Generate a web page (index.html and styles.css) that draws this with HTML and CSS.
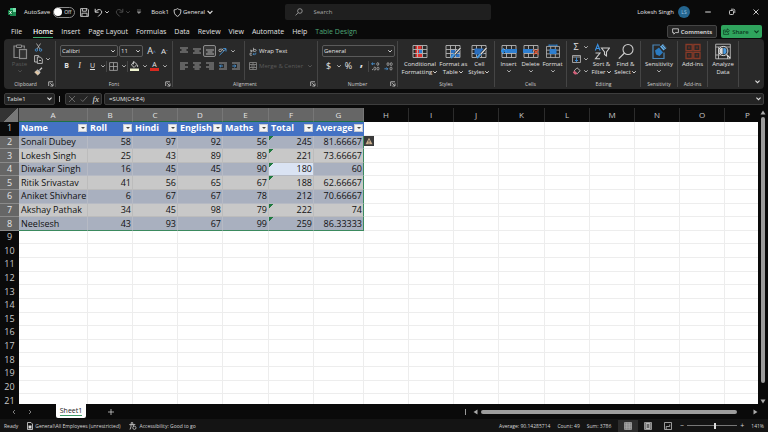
FILE: index.html
```html
<!DOCTYPE html>
<html lang="en">

<head>
  <meta charset="UTF-8" />
  <meta name="viewport" content="width=device-width, initial-scale=1.0" />
  <title>Book1 - Excel</title>
  <link rel="stylesheet" href="styles.css">
</head>

<body>

  <!-- Shared icons -->
  <svg class="defs" width="0" height="0" aria-hidden="true">
    <symbol id="chev" viewBox="0 0 6 6"><path d="M1.2 2.2 3 4l1.8-1.8" fill="none" stroke="currentColor" stroke-width="0.9" /></symbol>
    <symbol id="launch" viewBox="0 0 6 6"><path d="M.7 5V.8H5M2.2 2.2l2.4 2.4M5 2.4V5H2.4" fill="none" stroke="currentColor" stroke-width="0.8" /></symbol>
    <symbol id="grid" viewBox="0 0 16 14"><path d="M1 1h14v12H1zM1 5h14M1 9h14M5.5 1v12M10.5 1v12" fill="none" stroke="#b5b5b5" stroke-width="0.9" /></symbol>
  </svg>

  <!-- Title bar -->
  <header class="titlebar">
    <div class="title-left">
      <svg class="logo" width="8" height="8" viewBox="0 0 8 8"><rect x="2" width="6" height="8" rx=".6" fill="#33c481" /><path d="M5 0h3v4H5z" fill="#7be0ac" /><path d="M2 4h6v4H2z" fill="#1e8a51" /><rect y="2" width="5" height="5" rx=".5" fill="#107c41" /><path d="m1.4 3 2.2 3M3.6 3 1.4 6" stroke="#fff" stroke-width=".8" /></svg>
      <label class="autosave">AutoSave
        <input type="checkbox" class="switch">
        <span class="switch-track"><span class="knob"></span>Off</span>
      </label>
      <button class="tool" aria-label="Save"><svg width="9" height="9" viewBox="0 0 9 9"><path d="M.6.6h6.6l1.2 1.2v6.6H.6zM2.4.8v2.4h4V.8M2 8.2V5.2h5v3" fill="none" stroke="#d0d0d0" stroke-width=".9" /></svg></button>
      <button class="tool" aria-label="Undo"><svg width="9" height="9" viewBox="0 0 9 9"><path d="M1.2.8v3.4h3.4M1.4 4C3 1.6 5 1.1 6.4 1.9c1.7 1 1.6 2.8.5 3.9L4.2 8.5" fill="none" stroke="#d8d8d8" /></svg><svg class="chev" width="6" height="6"><use href="#chev" /></svg></button>
      <button class="tool off" aria-label="Redo"><svg width="9" height="9" viewBox="0 0 9 9"><path d="M7.8.8v3.4H4.4M7.6 4C6 1.6 4 1.1 2.6 1.9 1 2.9 1 4.7 2.1 5.8l2.7 2.7" fill="none" stroke="currentColor" /></svg><svg class="chev" width="6" height="6"><use href="#chev" /></svg></button>
      <button class="tool" aria-label="Customize"><svg width="6" height="6" viewBox="0 0 6 6"><path d="M1 1h4M1.200 2.800 3 4.600l1.800-1.800z" fill="#999" stroke="#999" stroke-width=".6" /></svg></button>
      <span class="book">Book1</span>
      <button class="tool label-btn"><svg width="9" height="9" viewBox="0 0 9 9"><path d="M4.5.6c1.2.9 2.3 1.2 3.4 1.2C8.1 5 7 7.300 4.500 8.400 2 7.300.9 5 1.100 1.800 2.200 1.800 3.300 1.500 4.500.6z" fill="none" stroke="#d8d8d8" stroke-width=".9" /></svg>General<svg width="8" height="8"><use href="#chev" /></svg></button>
    </div>
    <label class="search">
      <svg width="8" height="8" viewBox="0 0 8 8"><circle cx="4.900" cy="3" r="2.300" fill="none" stroke="#aaa" stroke-width=".8" /><path d="M3.200 4.700.6 7.400" stroke="#aaa" stroke-width=".8" /></svg>
      <input type="text" placeholder="Search" aria-label="Search">
    </label>
    <div class="title-right">
      <span>Lokesh Singh</span>
      <span class="avatar">LS</span>
      <button class="win" aria-label="Minimize"><svg width="8" height="8" viewBox="0 0 8 8"><path d="M1.200 4h5.600" stroke="#ddd" /></svg></button>
      <button class="win" aria-label="Restore"><svg width="8" height="8" viewBox="0 0 8 8"><rect x="1.500" y="2.500" width="4" height="4" rx=".8" fill="none" stroke="#ddd" stroke-width=".9" /><path d="M3 1.200h2.500a1.300 1.300 0 0 1 1.300 1.300V5" fill="none" stroke="#ddd" stroke-width=".8" /></svg></button>
      <button class="win" aria-label="Close"><svg width="8" height="8" viewBox="0 0 8 8"><path d="m1.500 1.500 5 5M6.500 1.500l-5 5" stroke="#ddd" stroke-width=".9" /></svg></button>
    </div>
  </header>

  <!-- Tabs -->
  <nav class="tabs">
    <a href="#">File</a>
    <a href="#" class="active">Home</a>
    <a href="#">Insert</a>
    <a href="#">Page Layout</a>
    <a href="#">Formulas</a>
    <a href="#">Data</a>
    <a href="#">Review</a>
    <a href="#">View</a>
    <a href="#">Automate</a>
    <a href="#">Help</a>
    <a href="#" class="context">Table Design</a>
    <div class="tab-actions">
      <button class="comments"><svg width="7" height="7" viewBox="0 0 7 7"><path d="M.6.8h5.800v3.800H3.400L1.800 6.200V4.600H.6z" fill="none" stroke="#ddd" stroke-width=".8" /></svg>Comments</button>
      <button class="share"><svg width="7" height="7" viewBox="0 0 7 7"><path d="M2.500 2H.6v4.400h5V4.800M2 4.400C2.200 2.600 3.300 2 4.400 2V.8L6.500 2.700 4.400 4.500V3.300C3.300 3.300 2.600 3.600 2 4.400z" fill="none" stroke="currentColor" stroke-width=".7" /></svg>Share<svg class="chev" width="7" height="7"><use href="#chev" /></svg></button>
    </div>
  </nav>

  <!-- Ribbon -->
  <section class="ribbon">
    <div class="group g-clipboard">
      <div class="group-body">
        <button class="big off"><svg width="16" height="16" viewBox="0 0 16 16"><path d="M4.500 2.500H2V14h4.500M10 2.500h2.300V5" fill="none" stroke="#8a8a8a" stroke-width="1.200" /><path d="M4.500 1.500h5v2.500h-5z" fill="none" stroke="#8a8a8a" /><rect x="7.500" y="6" width="7" height="9" fill="#333" stroke="#8a8a8a" stroke-width="1.200" /></svg>Paste<svg width="6" height="6"><use href="#chev" /></svg></button>
        <div class="stack">
          <button class="sm" aria-label="Cut"><svg width="9" height="9" viewBox="0 0 9 9"><path d="M2.500.5 6 6M6.500.5 3 6" stroke="#bbb" stroke-width=".8" /><circle cx="2.400" cy="7" r="1.200" fill="none" stroke="#4a9be0" stroke-width=".8" /><circle cx="6.600" cy="7" r="1.200" fill="none" stroke="#4a9be0" stroke-width=".8" /></svg></button>
          <div class="row"><button class="sm" aria-label="Copy"><svg width="9" height="9" viewBox="0 0 9 9"><path d="M3.200 7H.6V.6h4v1.200M3.300 2h3l2 2v4.400h-5zM5 5.500h2" fill="none" stroke="#c4c4c4" stroke-width=".9" /></svg></button><button class="arrow" aria-label="Copy options"><svg width="6" height="6"><use href="#chev" /></svg></button></div>
          <button class="sm" aria-label="Format Painter"><svg width="9" height="9" viewBox="0 0 9 9"><path d="m8 .8-2.600 2.600M3.200 2.700l3 3" stroke="#ccc" stroke-width="1.300" /><path d="M2.600 3.400.6 5.200l3.200 3 2-2.200z" fill="#e4c9a5" stroke="#ccc" stroke-width=".5" /></svg></button>
        </div>
      </div>
      <div class="group-name"><span>Clipboard</span><button class="launcher" aria-label="Clipboard settings"><svg width="6" height="6"><use href="#launch" /></svg></button></div>
    </div>

    <div class="group g-font">
      <div class="group-body lines">
        <div class="row">
          <span class="pick font-name"><select aria-label="Font"><option>Calibri</option></select><svg width="6" height="6"><use href="#chev" /></svg></span>
          <span class="pick font-size"><select aria-label="Font size"><option>11</option></select><svg width="6" height="6"><use href="#chev" /></svg></span>
          <button class="sm grow">A<sup>^</sup></button>
          <button class="sm shrink">A<sup>ˇ</sup></button>
        </div>
        <div class="row">
          <button class="sm b">B</button>
          <button class="sm i">I</button>
          <button class="sm u">U</button>
          <button class="arrow" aria-label="Underline options"><svg width="6" height="6"><use href="#chev" /></svg></button>
          <i class="sep"></i>
          <button class="sm" aria-label="Borders"><svg width="9" height="9" viewBox="0 0 9 9"><path d="M.6.6h7.800v7.800H.6zM4.500.6v7.800M.6 4.500h7.800" fill="none" stroke="#aaa" stroke-width=".8" /></svg></button>
          <button class="arrow" aria-label="Border options"><svg width="6" height="6"><use href="#chev" /></svg></button>
          <i class="sep"></i>
          <button class="sm" aria-label="Fill color"><svg width="9" height="10" viewBox="0 0 9 10"><path d="M3.800.6 1.400 4l2.800 2.400L7 3.400z M3.500.4v3M7.600 4v2" fill="none" stroke="#ccc" stroke-width=".9" /><path d="M0 7.500h9V10H0z" fill="#eef2cf" /></svg></button>
          <button class="arrow" aria-label="Fill options"><svg width="6" height="6"><use href="#chev" /></svg></button>
          <button class="sm font-color">A</button>
          <button class="arrow" aria-label="Font color options"><svg width="6" height="6"><use href="#chev" /></svg></button>
        </div>
      </div>
      <div class="group-name"><span>Font</span><button class="launcher" aria-label="Font settings"><svg width="6" height="6"><use href="#launch" /></svg></button></div>
    </div>

    <div class="group g-align">
      <div class="group-body">
        <div class="lines">
          <div class="row">
            <button class="sm" aria-label="Top align"><svg width="8" height="8" viewBox="0 0 8 8"><path d="M0 1h8M1.500 3h5M0 5h8" stroke="#b8b8b8" stroke-width=".8" /></svg></button>
            <button class="sm" aria-label="Middle align"><svg width="8" height="8" viewBox="0 0 8 8"><path d="M0 2h8M1.500 4h5M0 6h8" stroke="#b8b8b8" stroke-width=".8" /></svg></button>
            <button class="sm pressed" aria-label="Bottom align"><svg width="8" height="8" viewBox="0 0 8 8"><path d="M0 3h8M1.500 5h5M0 7h8" stroke="#ccc" stroke-width=".8" /></svg></button>
            <button class="sm" aria-label="Orientation"><svg width="9" height="9" viewBox="0 0 9 9"><path d="M1.500 8.200 8 1.800M8 4.500V1.600H5.200" fill="none" stroke="#4a9be0" stroke-width=".9" /><circle cx="2.200" cy="3.400" r="1.300" fill="none" stroke="#ccc" stroke-width=".8" /><path d="M3.800 1.500 5.600 4" stroke="#ccc" stroke-width=".8" /></svg></button>
            <button class="arrow" aria-label="Orientation options"><svg width="6" height="6"><use href="#chev" /></svg></button>
          </div>
          <div class="row">
            <button class="sm" aria-label="Align left"><svg width="8" height="8" viewBox="0 0 8 8"><path d="M0 1h8M0 3h5M0 5h8M0 7h5" stroke="#b8b8b8" stroke-width=".8" /></svg></button>
            <button class="sm" aria-label="Center"><svg width="8" height="8" viewBox="0 0 8 8"><path d="M0 1h8M1.500 3h5M0 5h8M1.500 7h5" stroke="#b8b8b8" stroke-width=".8" /></svg></button>
            <button class="sm" aria-label="Align right"><svg width="8" height="8" viewBox="0 0 8 8"><path d="M0 1h8M3 3h5M0 5h8M3 7h5" stroke="#b8b8b8" stroke-width=".8" /></svg></button>
            <button class="sm" aria-label="Decrease indent"><svg width="8" height="8" viewBox="0 0 8 8"><path d="M0 1h8M5 3h3M5 5h3M0 7h8" stroke="#b8b8b8" stroke-width=".8" /><path d="M4 4H.6M2 2.600.6 4 2 5.400" fill="none" stroke="#4a9be0" stroke-width=".9" /></svg></button>
            <button class="sm" aria-label="Increase indent"><svg width="8" height="8" viewBox="0 0 8 8"><path d="M0 1h8M5 3h3M5 5h3M0 7h8" stroke="#b8b8b8" stroke-width=".8" /><path d="M.3 4h3.400M2.400 2.600 3.800 4 2.400 5.400" fill="none" stroke="#4a9be0" stroke-width=".9" /></svg></button>
          </div>
        </div>
        <div class="lines wraps">
          <button class="text-btn"><svg width="8" height="9" viewBox="0 0 8 9"><path d="M1 3.500c1.500-.8 2 0 2 .8M3 3v1.500H1.500M4.500.8v3.600h1.700a.9.9 0 0 0 0-2H4.500M3 6.200H1v2h2" fill="none" stroke="#c4c4c4" stroke-width=".7" /><path d="M4 7.200h2.800V5.600M5 6.200l-1 1 1 1" fill="none" stroke="#4a9be0" stroke-width=".7" /></svg>Wrap Text</button>
          <button class="text-btn off"><svg width="8" height="8" viewBox="0 0 8 8"><path d="M.5.5h7v7h-7zM.5 2.500h7M.5 5.500h7M4 .5v2M4 5.500v2M2 4h4" fill="none" stroke="#8a8a8a" stroke-width=".8" /></svg>Merge &amp; Center<svg class="chev" width="6" height="6"><use href="#chev" /></svg></button>
        </div>
      </div>
      <div class="group-name"><span>Alignment</span><button class="launcher" aria-label="Alignment settings"><svg width="6" height="6"><use href="#launch" /></svg></button></div>
    </div>

    <div class="group g-number">
      <div class="group-body lines">
        <div class="row"><span class="pick number-format"><select aria-label="Number format"><option>General</option></select><svg width="6" height="6"><use href="#chev" /></svg></span></div>
        <div class="row">
          <button class="sm money">$</button>
          <button class="arrow" aria-label="Currency options"><svg width="6" height="6"><use href="#chev" /></svg></button>
          <button class="sm money">%</button>
          <button class="sm comma">,</button>
          <i class="sep"></i>
          <button class="sm" aria-label="Increase decimal"><svg width="9" height="9" viewBox="0 0 9 9"><path d="M4 1.800H.6M2 .5.6 1.800 2 3" fill="none" stroke="#4a9be0" stroke-width=".8" /><ellipse cx="6.800" cy="2" rx="1" ry="1.400" fill="none" stroke="#bbb" stroke-width=".7" /><ellipse cx="3.800" cy="6.600" rx="1" ry="1.500" fill="none" stroke="#bbb" stroke-width=".7" /><ellipse cx="7" cy="6.600" rx="1" ry="1.500" fill="none" stroke="#bbb" stroke-width=".7" /><path d="M1 7.600h.8" stroke="#bbb" /></svg></button>
          <button class="sm" aria-label="Decrease decimal"><svg width="9" height="9" viewBox="0 0 9 9"><path d="M.4 6.800h3.400M2.500 5.500l1.300 1.300-1.300 1.300" fill="none" stroke="#4a9be0" stroke-width=".8" /><ellipse cx="4" cy="2.100" rx="1" ry="1.500" fill="none" stroke="#bbb" stroke-width=".7" /><ellipse cx="7.200" cy="2.100" rx="1" ry="1.500" fill="none" stroke="#bbb" stroke-width=".7" /><ellipse cx="7" cy="6.600" rx="1" ry="1.500" fill="none" stroke="#bbb" stroke-width=".7" /></svg></button>
        </div>
      </div>
      <div class="group-name"><span>Number</span><button class="launcher" aria-label="Number settings"><svg width="6" height="6"><use href="#launch" /></svg></button></div>
    </div>

    <div class="group g-styles">
      <div class="group-body">
        <button class="big"><svg width="16" height="14" viewBox="0 0 16 14"><path d="M3.500 1h6v4H7v4h3.500v4h-7z" fill="#e0312d" /><path d="M7 5h4v4H7z" fill="#2f7fd0" /><use href="#grid" width="16" height="14" /></svg>Conditional<span class="drop">Formatting<svg width="6" height="6"><use href="#chev" /></svg></span></button>
        <button class="big"><svg width="16" height="14" viewBox="0 0 16 14"><path d="M5.500 5H15v8H5.500z" fill="#2a6fc0" /><use href="#grid" width="16" height="14" /><path d="M15.500 3.500 9.500 10l-3 3.500" stroke="#222" stroke-width="2.600" /><path d="m15.500 3.500-6 6.500" stroke="#ddd" stroke-width="1.200" /><path d="M9.500 9.500 6 13.500" stroke="#4a9be0" stroke-width="2" /></svg>Format as<span class="drop">Table<svg width="6" height="6"><use href="#chev" /></svg></span></button>
        <button class="big"><svg width="16" height="14" viewBox="0 0 16 14"><use href="#grid" width="16" height="14" /><path d="M3.500 4h9v6h-9z" fill="#2a6fc0" /><path d="M15.500 3.500 9.500 10l-3 3.500" stroke="#222" stroke-width="2.600" /><path d="m15.500 3.500-6 6.500" stroke="#ddd" stroke-width="1.200" /><path d="M9.500 9.500 6 13.500" stroke="#4a9be0" stroke-width="2" /></svg>Cell<span class="drop">Styles<svg width="6" height="6"><use href="#chev" /></svg></span></button>
      </div>
      <div class="group-name"><span>Styles</span></div>
    </div>

    <div class="group g-cells">
      <div class="group-body">
        <button class="big"><svg width="16" height="14" viewBox="0 0 16 14"><use href="#grid" width="16" height="14" /><path d="M4 4.500h12v4H4z" fill="#2f7fd0" /><path d="M6 6.500H.5M3 4 .5 6.500 3 9" fill="none" stroke="#2f8fe8" stroke-width="1.300" /></svg>Insert<svg width="6" height="6"><use href="#chev" /></svg></button>
        <button class="big"><svg width="16" height="14" viewBox="0 0 16 14"><use href="#grid" width="16" height="14" /><path d="M0 4.500h11l-2 2 2 2H0z" fill="#2f7fd0" /><path d="m10.500 5 5 5M15.500 5l-5 5" stroke="#d8502f" stroke-width="1.300" /></svg>Delete<svg width="6" height="6"><use href="#chev" /></svg></button>
        <button class="big"><svg width="16" height="14" viewBox="0 0 16 14"><use href="#grid" y="1" width="16" height="13" /><path d="M4.500 4.500h7v5h-7z" fill="#2f7fd0" /><path d="M4 .7h8M4 0v1.500M12 0v1.500" stroke="#2f8fe8" stroke-width=".9" /></svg>Format<svg width="6" height="6"><use href="#chev" /></svg></button>
      </div>
      <div class="group-name"><span>Cells</span></div>
    </div>

    <div class="group g-edit">
      <div class="group-body">
        <div class="stack">
          <div class="row"><button class="sm sigma">Σ</button><button class="arrow" aria-label="AutoSum options"><svg width="6" height="6"><use href="#chev" /></svg></button></div>
          <div class="row"><button class="sm" aria-label="Fill"><svg width="9" height="8" viewBox="0 0 9 8"><path d="M.5.5h8v7h-8zM.5 2h8" fill="none" stroke="#bbb" stroke-width=".8" /><path d="M4.500 2.500v4M3 5l1.500 1.500L6 5" fill="none" stroke="#3b92e4" stroke-width=".9" /></svg></button><button class="arrow" aria-label="Fill options"><svg width="6" height="6"><use href="#chev" /></svg></button></div>
          <div class="row"><button class="sm" aria-label="Clear"><svg width="9" height="8" viewBox="0 0 9 8"><path d="M5 .8 8.200 3.600 5.200 6.800 2 4z" fill="none" stroke="#ccc" stroke-width=".8" /><path d="M2.400 3.600 5.400 6.400 4.200 7.500H2.800L.8 5.500z" fill="#d5607a" /></svg></button><button class="arrow" aria-label="Clear options"><svg width="6" height="6"><use href="#chev" /></svg></button></div>
        </div>
        <button class="big"><svg width="16" height="16" viewBox="0 0 16 16"><path d="M1.300 7 3.700 1l2.400 6M2.200 5h3" fill="none" stroke="#3b92e4" stroke-width="1.100" /><path d="M1.500 9.500H6l-4.500 5.700H6M7.500 4.500h8l-3 4v4l-2-1.500V8.500z" fill="none" stroke="#ccc" stroke-width="1.100" /></svg>Sort &amp;<span class="drop">Filter<svg width="6" height="6"><use href="#chev" /></svg></span></button>
        <button class="big"><svg width="16" height="16" viewBox="0 0 16 16"><circle cx="10" cy="6" r="5" fill="none" stroke="#ccc" stroke-width="1.100" /><path d="M6.500 9.500.8 15.200" stroke="#ccc" stroke-width="1.200" /></svg>Find &amp;<span class="drop">Select<svg width="6" height="6"><use href="#chev" /></svg></span></button>
      </div>
      <div class="group-name"><span>Editing</span></div>
    </div>

    <div class="group g-sens">
      <div class="group-body">
        <button class="big"><svg width="16" height="16" viewBox="0 0 16 16"><path d="M9 1.500H2V15h11V9" fill="none" stroke="#4a86b8" stroke-width="1.200" /><path d="m4 7 4-3 4 5-3.500 3.500L5 11z" fill="#2a7ac0" /><path d="m9 3 3-2.500 3.500 4L12.500 7z" fill="#69b4ee" /><path d="m10.500 2 3.500 4M12 1l3 3.500" stroke="#222" stroke-width=".6" /></svg>Sensitivity<svg width="6" height="6"><use href="#chev" /></svg></button>
      </div>
      <div class="group-name"><span>Sensitivity</span></div>
    </div>

    <div class="group g-addins">
      <div class="group-body">
        <button class="big"><svg width="16" height="16" viewBox="0 0 16 16"><path d="M1 1h6.200v6.200H1zM8.800 1H15v6.200H8.800zM1 8.800h6.200V15H1zM8.800 8.800H15V15H8.800z" fill="none" stroke="#a03f28" stroke-width="1.300" /><path d="M3 3h2.200v2.200H3zM10.800 3H13v2.200h-2.200zM3 10.800h2.200V13H3zM10.800 10.800H13V13h-2.200z" fill="#6d2c1e" /></svg>Add-ins</button>
      </div>
      <div class="group-name"><span>Add-ins</span></div>
    </div>

    <div class="group g-analyze">
      <div class="group-body">
        <button class="big"><svg width="16" height="16" viewBox="0 0 16 16"><path d="M.7.7h14.600v14.600H.7zM.7 3.500h14.600M.7 11.500h5M3.500 3.500v12M12.500 12v3.500" fill="none" stroke="#bbb" stroke-width=".9" /><circle cx="8.300" cy="7.500" r="4.600" fill="#292929" stroke="#ddd" /><path d="M8.300 4.300a3.200 3.200 0 0 1 0 6.400z" fill="#4a9be0" /><path d="M7.700 4.300a3.200 3.200 0 0 0 0 6.400z" fill="#ddd" /><path d="m11.500 11 3.500 3.500" stroke="#ddd" stroke-width="1.200" /></svg>Analyze<span>Data</span></button>
      </div>
    </div>

    <button class="collapse" aria-label="Collapse ribbon"><svg width="7" height="7"><use href="#chev" /></svg></button>
  </section>

  <!-- Formula bar -->
  <div class="formula-bar">
    <div class="name-box"><input type="text" value="Table1" aria-label="Name box"><svg width="7" height="7"><use href="#chev" /></svg></div>
    <i class="grip"></i>
    <div class="fx">
      <button aria-label="Cancel"><svg width="8" height="8" viewBox="0 0 8 8"><path d="m1 1 6 6M7 1 1 7" stroke="#777" stroke-width=".8" /></svg></button>
      <button aria-label="Enter"><svg width="8" height="8" viewBox="0 0 8 8"><path d="m.8 4.500 2 2L7.400 1.500" fill="none" stroke="#777" stroke-width=".8" /></svg></button>
      <button class="fx-btn">fx</button>
    </div>
    <div class="formula"><input type="text" value="=SUM(C4:E4)" aria-label="Formula"><svg width="7" height="7"><use href="#chev" /></svg></div>
  </div>

  <!-- Sheet -->
  <main class="workspace">
    <div class="sheet">
      <table>
        <colgroup id="cols"></colgroup>
        <thead id="head"></thead>
        <tbody id="rows"></tbody>
      </table>
    </div>
    <div class="vscroll">
      <svg width="6" height="5" viewBox="0 0 6 5"><path d="M3 .5 5.500 4.500h-5z" fill="#aaa" /></svg>
      <div class="vtrack"><div class="thumb"></div></div>
      <svg width="6" height="5" viewBox="0 0 6 5"><path d="M3 4.500 5.500.5h-5z" fill="#aaa" /></svg>
    </div>
  </main>

  <!-- Sheet tabs -->
  <div class="sheet-tabs">
    <button aria-label="Previous sheet"><svg width="6" height="6" viewBox="0 0 6 6"><path d="M4 1 2 3l2 2" fill="none" stroke="#999" stroke-width=".8" /></svg></button>
    <button aria-label="Next sheet"><svg width="6" height="6" viewBox="0 0 6 6"><path d="m2 1 2 2-2 2" fill="none" stroke="#999" stroke-width=".8" /></svg></button>
    <button class="sheet-tab"><span>Sheet1</span></button>
    <button class="add" aria-label="New sheet"><svg width="6" height="6" viewBox="0 0 6 6"><path d="M3 0v6M0 3h6" stroke="#ccc" stroke-width=".8" /></svg></button>
    <div class="hscroll">
      <i class="grip"></i>
      <svg width="5" height="6" viewBox="0 0 5 6"><path d="M.5 3 4.500.5v5z" fill="#aaa" /></svg>
      <div class="htrack"><div class="thumb"></div></div>
      <svg width="5" height="6" viewBox="0 0 5 6"><path d="M4.500 3 .5.5v5z" fill="#aaa" /></svg>
    </div>
  </div>

  <!-- Status bar -->
  <footer class="status">
    <span class="ready">Ready</span>
    <span class="item"><svg width="6" height="8" viewBox="0 0 6 8"><path d="M.5.5h3.500L5.500 2v5.500h-5z" fill="none" stroke="#ddd" stroke-width=".8" /><path d="M1.500 3.500h3v3h-3z" fill="#ddd" /></svg>General\All Employees (unrestricted)</span>
    <span class="item access"><svg width="8" height="8" viewBox="0 0 8 8"><circle cx="3" cy="1.200" r=".9" fill="none" stroke="#ddd" stroke-width=".7" /><path d="M.3 2.600h6M2 2.800v2L1 7.500M4.300 2.800v1.700" fill="none" stroke="#ddd" stroke-width=".8" /><circle cx="5.400" cy="5.800" r="1.600" fill="none" stroke="#ddd" stroke-width=".7" /></svg>Accessibility: Good to go</span>
    <div class="status-right">
      <span>Average: 90.14285714</span>
      <span>Count: 49</span>
      <span>Sum: 3786</span>
      <div class="views">
        <button class="on" aria-label="Normal view"><svg width="8" height="8" viewBox="0 0 8 8"><path d="M.5.5h7v7h-7zM.5 2.200h7M.5 4h7M.5 5.800h7M2.800.5v7M5.200.5v7" fill="#777" stroke="#bbb" stroke-width=".6" /></svg></button>
        <button aria-label="Page layout view"><svg width="8" height="8" viewBox="0 0 8 8"><path d="M.5.5h7v7h-7z" fill="#666" stroke="#aaa" stroke-width=".8" /><path d="M2.200 1.500h3.600v5H2.200z" fill="none" stroke="#ddd" stroke-width=".7" /></svg></button>
        <button aria-label="Page break view"><svg width="8" height="8" viewBox="0 0 8 8"><path d="M.5.5h7v7h-7zM2.200 7.500V4.500h3.500v-2" fill="none" stroke="#bbb" stroke-width=".8" /></svg></button>
      </div>
      <span class="zoom-sign">−</span>
      <input type="range" class="zoom" min="10" max="190" value="112" aria-label="Zoom">
      <span class="zoom-sign">+</span>
      <span class="percent">141%</span>
    </div>
  </footer>

  <script>
    const columns = ['A', 'B', 'C', 'D', 'E', 'F', 'G', 'H', 'I', 'J', 'K', 'L', 'M', 'N', 'O', 'P'];
    const titles = ['Name', 'Roll', 'Hindi', 'English', 'Maths', 'Total', 'Average'];
    const data = [
      ['Sonali Dubey', 58, 97, 92, 56, 245, '81.66667'],
      ['Lokesh Singh', 25, 43, 89, 89, 221, '73.66667'],
      ['Diwakar Singh', 16, 45, 45, 90, 180, '60'],
      ['Ritik Srivastav', 41, 56, 65, 67, 188, '62.66667'],
      ['Aniket Shivhare', 6, 67, 67, 78, 212, '70.66667'],
      ['Akshay Pathak', 34, 45, 98, 79, 222, '74'],
      ['Neelsesh', 43, 93, 67, 99, 259, '86.33333']
    ];
    const noFlag = [4];     // rows whose total has no green corner
    const rowCount = 21;

    document.getElementById('cols').innerHTML =
      '<col class="c-num">' + columns.map(c => `<col class="c-${c}">`).join('');

    document.getElementById('head').innerHTML = '<tr><th class="corner"></th>' +
      columns.map((c, i) => `<th class="${i < 7 ? 'picked' : ''}">${c}</th>`).join('') + '</tr>';

    let html = '';
    for (let r = 0; r < rowCount; r++) {
      html += `<tr><th class="num ${r > 0 && r < 8 ? 'picked' : ''}">${r + 1}</th>`;
      columns.forEach((c, i) => {
        if (r === 0 && i < 7) {
          html += `<td class="title"><div>${titles[i]}<button class="filter" aria-label="Filter ${titles[i]}"></button></div></td>`;
        } else if (r > 0 && r <= data.length && i < 7) {
          const cls = ['cell', r % 2 ? 'band' : 'plain'];
          if (i === 0) cls.push('name');
          if (i === 5 && !noFlag.includes(r - 1)) cls.push('flag');
          if (i === 5 && r === 3) cls.push('current');
          if (i === 6) cls.push('last');
          if (r === data.length) cls.push('bottom');
          html += `<td class="${cls.join(' ')}">${data[r - 1][i]}</td>`;
        } else if (r === 1 && i === 7) {
          html += '<td class="warn-cell"><button class="warn" aria-label="Error options"><svg width="8" height="8" viewBox="0 0 8 8"><path d="M4 .8 7.500 7.200h-7z" fill="#c9ae8c"/><path d="M4 3v2.200M4 5.800v.8" stroke="#333" stroke-width=".8"/></svg></button></td>';
        } else {
          html += '<td></td>';
        }
      });
      html += '</tr>';
    }
    document.getElementById('rows').innerHTML = html;
  </script>
</body>

</html>
```
FILE: styles.css
```css
* {
  box-sizing: border-box;
}

body {
  margin: 0;
  height: 100vh;
  display: flex;
  flex-direction: column;
  overflow: hidden;
  background-color: #0a0a0a;
  color: #e2e2e2;
  font-family: "Open Sans", "Noto Sans", sans-serif;
  font-size: 6px;
  line-height: 8px;
}

button,
input,
select {
  font: inherit;
  color: inherit;
  background: none;
  border: none;
  padding: 0;
  margin: 0;
  outline: none;
}

button {
  display: flex;
  align-items: center;
  justify-content: center;
}

svg {
  display: block;
  flex: none;
}

.defs {
  position: absolute;
}

.off {
  color: #5a5a5a;
}

/* Title bar */
.titlebar {
  display: grid;
  grid-template-columns: 1fr 27% 1fr;
  align-items: center;
  height: 24px;
  padding-left: 8px;
}

.title-left {
  display: flex;
  align-items: center;
}

.autosave {
  display: flex;
  align-items: center;
  gap: 3px;
  margin-left: 8px;
}

.switch {
  position: absolute;
  opacity: 0;
}

.switch-track {
  display: flex;
  align-items: center;
  gap: 2px;
  width: 22px;
  height: 11px;
  border: 1px solid #8a8a8a;
  border-radius: 6px;
  font-size: 5px;
}

.knob {
  width: 8px;
  height: 8px;
  border-radius: 50%;
  background-color: #fff;
}

.tool {
  margin-left: 5px;
  gap: 1px;
}

.tool.off {
  color: #4a4a4a;
}

.book {
  margin-left: 9px;
}

.label-btn {
  margin-left: 4px;
}

.search {
  display: flex;
  align-items: center;
  gap: 10px;
  height: 16px;
  padding-left: 10px;
  border-radius: 2px;
  background-color: #1f1f1f;
}

.search input {
  flex: 1;
  min-width: 0;
}

.search input::placeholder {
  color: #a8a8a8;
  opacity: 1;
}

.title-right {
  display: flex;
  align-items: center;
  justify-content: flex-end;
}

.avatar {
  width: 12px;
  margin: 0 6px 0 4px;
  border-radius: 50%;
  background-color: #24658f;
  color: #9cc7e4;
  font-size: 5px;
  line-height: 12px;
  text-align: center;
}

.win {
  width: 24px;
}

/* Tabs */
.tabs {
  display: flex;
  align-items: center;
  gap: 8px;
  height: 15px;
  padding: 0 6px 0 11px;
}

.tabs a {
  padding: 2px 0 1px;
  color: #e2e2e2;
  font-size: 7px;
  text-decoration: none;
  white-space: nowrap;
  border-bottom: 1px solid transparent;
}

.tabs .active {
  margin-left: 3px;
  color: #fff;
  font-weight: 600;
  border-color: #3fae6e;
}

.tabs .context {
  color: #4fa878;
}

.tab-actions {
  display: flex;
  gap: 4px;
  margin-left: auto;
  font-weight: 600;
}

.comments,
.share {
  height: 13px;
  gap: 2px;
  border-radius: 2px;
}

.comments {
  width: 50px;
  background-color: #242424;
  border: 1px solid #454545;
}

.share {
  width: 41px;
  background-color: #2fa45d;
  color: #0c3a1f;
}

.share .chev {
  margin-left: 2px;
}

/* Ribbon */
.ribbon {
  display: flex;
  height: 50px;
  margin: 0 4px;
  padding: 2px 0;
  border-radius: 4px;
  background-color: #292929;
}

.group {
  display: flex;
  flex-direction: column;
  flex: none;
  border-right: 1px solid #454545;
}

.group-body {
  display: flex;
  justify-content: center;
  height: 39px;
}

.group-name {
  display: flex;
  align-items: center;
  position: relative;
  height: 7px;
  font-size: 5px;
  color: #cfcfcf;
}

.group-name span {
  flex: 1;
  text-align: center;
}

.launcher {
  position: absolute;
  right: 1px;
}

.g-clipboard { width: 52px; }
.g-font { width: 117px; }
.g-align { width: 145px; }
.g-number { width: 80px; }
.g-styles { width: 97px; }
.g-cells { width: 72px; }
.g-edit { width: 74px; }
.g-sens { width: 37px; }
.g-addins { width: 30px; }
.g-analyze { width: 31px; }

.g-clipboard .group-name {
  padding-right: 8px;
}

.lines {
  display: flex;
  flex-direction: column;
  justify-content: flex-start;
  gap: 3px;
}

.group-body.lines,
.g-align .group-body {
  justify-content: flex-start;
  padding-left: 4px;
}

.group-body.lines,
.g-align .lines {
  padding-top: 4px;
}

.row {
  display: flex;
  align-items: center;
}

.lines .row,
.lines .text-btn {
  height: 12px;
}

.sm {
  width: 13px;
  height: 12px;
}

.arrow {
  width: 7px;
  height: 12px;
  color: #bdbdbd;
}

.sep {
  width: 1px;
  height: 11px;
  background-color: #454545;
}

.pick {
  display: flex;
  align-items: center;
  position: relative;
  height: 12px;
  border: 1px solid #5a5a5a;
  border-radius: 2px;
}

.pick select {
  appearance: none;
  width: 100%;
  height: 10px;
  padding-left: 1px;
}

.pick svg {
  position: absolute;
  right: 1px;
  pointer-events: none;
}

.font-name {
  width: 58px;
}

.font-size {
  width: 24px;
  margin: 0 2px 0 1px;
}

.number-format {
  width: 73px;
}

.grow,
.shrink {
  align-items: baseline;
  font-size: 9px;
  line-height: 12px;
}

.shrink {
  font-size: 8px;
}

.grow sup,
.shrink sup {
  font-size: 5px;
  line-height: 5px;
  color: #4a9be0;
}

.b,
.u {
  font-size: 7px;
}

.b {
  font-weight: 700;
}

.i {
  font-family: "Liberation Serif", serif;
  font-size: 8px;
  font-style: italic;
}

.u {
  text-decoration: underline;
}

.font-color {
  width: 9px;
  height: 10px;
  margin: 0 2px;
  font-size: 7px;
  border-bottom: 3px solid #d8291f;
}

.money {
  font-size: 9px;
}

.comma {
  align-items: flex-start;
  font-size: 12px;
  font-weight: 700;
  line-height: 4px;
}

.sigma {
  font-size: 9px;
}

.pressed {
  border: 1px solid #8c8c8c;
  border-radius: 2px;
  background-color: #383838;
}

.wraps {
  margin-left: 2px;
  padding-left: 4px;
  border-left: 1px solid #454545;
}

.text-btn {
  justify-content: flex-start;
  gap: 2px;
}

.text-btn .chev {
  margin-left: 2px;
}

.stack {
  display: flex;
  flex-direction: column;
}

.big {
  flex-direction: column;
  justify-content: flex-start;
  padding-top: 2px;
}

.big > svg:first-child {
  height: 17px;
}

.big > svg:last-child {
  opacity: 0.8;
}

.drop {
  display: flex;
  align-items: center;
}

.g-clipboard .big {
  width: 24px;
}

.g-styles .group-body {
  gap: 1px;
}

.g-cells .big {
  width: 22px;
}

.g-edit .big {
  width: 24px;
}

.collapse {
  align-self: flex-end;
  margin: 0 3px 2px auto;
}

/* Formula bar */
.formula-bar {
  display: flex;
  align-items: center;
  height: 19px;
  padding: 0 4px;
}

.name-box,
.fx,
.formula {
  display: flex;
  align-items: center;
  height: 12px;
  border: 1px solid #3d3d3d;
  border-radius: 2px;
  background-color: #242424;
}

.name-box {
  width: 51px;
  padding: 0 1px 0 2px;
}

.name-box input,
.formula input {
  flex: 1;
  min-width: 0;
}

.grip {
  width: 1px;
  height: 6px;
  background-color: #999;
}

.formula-bar .grip {
  margin: 0 5px 0 4px;
}

.fx {
  justify-content: space-around;
  width: 37px;
  margin-right: 2px;
}

.fx-btn {
  font-family: "Liberation Serif", serif;
  font-size: 9px;
  font-style: italic;
}

.formula {
  flex: 1;
  padding: 0 1px 0 4px;
}

/* Sheet */
.workspace {
  flex: 1;
  min-height: 0;
  display: flex;
}

.sheet {
  flex: 1;
  overflow: hidden;
  background-color: #fff;
}

.sheet table {
  width: calc(100% + 13px);
  height: calc(100% + 4px);
  table-layout: fixed;
  border-spacing: 0;
}

.c-num { width: 19px; }
.c-A { width: 69px; }
.c-B, .c-C, .c-D, .c-F { width: 45px; }
.c-E { width: 46px; }
.c-G { width: 50px; }
.c-H, .c-I, .c-J, .c-L, .c-M, .c-N, .c-O { width: 45px; }
.c-K { width: 46px; }

.sheet th,
.sheet td {
  padding: 0;
  line-height: 12px;
}

.sheet th {
  background-color: #0a0a0a;
  color: #c8c8c8;
  font-size: 8px;
  font-weight: 400;
  border-right: 1px solid #2c2c2c;
}

.sheet thead th {
  height: 14px;
}

.sheet .num {
  font-size: 9px;
  border-right: 0;
  border-bottom: 1px solid #0a0a0a;
}

.sheet .picked {
  background-color: #666;
  color: #e4e4e4;
  border-right-color: #777;
}

.sheet .num.picked {
  border-bottom-color: #8a8a8a;
}

.sheet thead .picked {
  border-bottom: 1px solid #1f7145;
}

.sheet .corner {
  background: linear-gradient(135deg, #333 55%, #777 56%);
}

.sheet td {
  border-right: 1px solid #ededed;
  border-bottom: 1px solid #ededed;
  color: #111;
  font-size: 9px;
}

.sheet .title {
  padding-left: 2px;
  background-color: #4472c4;
  border-color: #4472c4;
  color: #fff;
  font-weight: 700;
}

.title div {
  display: flex;
  align-items: center;
  justify-content: space-between;
}

.filter {
  flex: none;
  width: 9px;
  height: 8px;
  background-color: #f4f4f4;
  border: 1px solid #c4c9d4;
}

.filter::after {
  content: "";
  border: 2px solid transparent;
  border-top-color: #444;
  border-bottom: 0;
}

.sheet .cell {
  padding-right: 1px;
  text-align: right;
}

.sheet .name {
  padding: 0 0 0 2px;
  text-align: left;
  white-space: nowrap;
}

.sheet .band {
  background-color: #a9b0bf;
  border-color: #b6bac4;
}

.sheet .plain {
  background-color: #c8c8c8;
  border-color: #bcbcbc;
}

.sheet .current {
  background-color: #dae3f3;
}

.sheet .flag {
  background-image: linear-gradient(135deg, #1f7a3f 50%, transparent 51%);
  background-size: 4px 4px;
  background-repeat: no-repeat;
}

.sheet .last {
  border-right-color: #3b8a5f;
}

.sheet .bottom {
  border-bottom-color: #3b8a5f;
}

.warn-cell {
  position: relative;
}

.warn {
  position: absolute;
  top: 0;
  left: 0;
  width: 10px;
  height: 10px;
  background-color: #3a3a3a;
}

/* Scroll bars */
.vscroll {
  display: flex;
  flex-direction: column;
  align-items: center;
  gap: 2px;
  width: 10px;
  padding: 2px 0 0;
}

.thumb {
  border-radius: 2px;
  background-color: #9c9c9c;
}

.vtrack {
  flex: 1;
  width: 4px;
}

.vtrack .thumb {
  height: 95%;
}

.hscroll {
  display: flex;
  align-items: center;
  gap: 3px;
  width: 40%;
  margin-left: auto;
  padding-right: 10px;
}

.hscroll .grip {
  margin-right: 4px;
}

.htrack {
  flex: 1;
}

.htrack .thumb {
  width: 95%;
  height: 4px;
}

/* Sheet tabs */
.sheet-tabs {
  display: flex;
  height: 15px;
  padding-left: 11px;
}

.sheet-tabs > button {
  width: 6px;
  margin-right: 10px;
}

.sheet-tabs > .sheet-tab {
  width: 30px;
  height: 14px;
  margin: 0 0 0 13px;
  background-color: #fff;
  color: #222;
  font-size: 7px;
  border-radius: 0 0 2px 2px;
}

.sheet-tab span {
  border-bottom: 1px solid #3f9a68;
}

.sheet-tabs > .add {
  margin-left: 22px;
}

/* Status bar */
.status {
  display: flex;
  align-items: center;
  height: 13px;
  padding: 0 4px;
  background-color: #141414;
  font-size: 5px;
  color: #d6d6d6;
}

.item {
  display: flex;
  align-items: center;
  gap: 2px;
  margin-left: 9px;
}

.status-right {
  display: flex;
  align-items: center;
  gap: 7px;
  margin-left: auto;
}

.views {
  display: flex;
  margin-right: -5px;
}

.views button {
  width: 20px;
  height: 12px;
}

.views .on {
  background-color: #2c2c2c;
}

.zoom-sign {
  width: 4px;
  font-size: 7px;
}

.zoom {
  appearance: none;
  width: 50px;
  height: 8px;
  margin: 0 -4px;
  background: linear-gradient(#777, #777) center / 100% 1px no-repeat;
}

.zoom::-webkit-slider-thumb {
  appearance: none;
  width: 2px;
  height: 6px;
  background-color: #ddd;
}
```
